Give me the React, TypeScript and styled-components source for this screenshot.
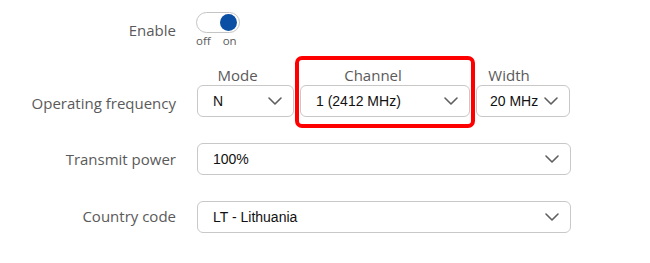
import React, { useState } from "react";
import styled, { createGlobalStyle } from "styled-components";

const GlobalStyle = createGlobalStyle`
  html, body {
    margin: 0;
    padding: 0;
    background: #ffffff;
  }
  body {
    font-family: "Open Sans", "Liberation Sans", sans-serif;
  }
`;

interface SelectProps {
  value: string;
  width: number;
  padLeft?: number;
}

const Chevron = () => (
  <svg width="14" height="8" viewBox="0 0 14 8" fill="none">
    <path
      d="M1 1L7 7L13 1"
      stroke="#5f5f5f"
      strokeWidth="1.6"
      strokeLinecap="round"
      strokeLinejoin="round"
    />
  </svg>
);

const Select: React.FC<SelectProps> = ({ value, width, padLeft = 15 }) => (
  <SelectBox $width={width} $padLeft={padLeft}>
    <SelectText>{value}</SelectText>
    <Chevron />
  </SelectBox>
);

const App: React.FC = () => {
  const [enabled, setEnabled] = useState(true);

  return (
    <>
      <GlobalStyle />
      <Form>
        <Row $top={12}>
          <Label $offset={8}>Enable</Label>
          <ToggleWrap>
            <Toggle $on={enabled} onClick={() => setEnabled(!enabled)}>
              <Knob $on={enabled} />
            </Toggle>
            <ToggleLabels>
              <span>off</span>
              <span>on</span>
            </ToggleLabels>
          </ToggleWrap>
        </Row>

        <Row $top={17}>
          <Label $offset={28}>Operating frequency</Label>
          <FreqGroup>
            <FreqCol>
              <ColHeading $shift={-8}>Mode</ColHeading>
              <Select value="N" width={97} />
            </FreqCol>
            <FreqCol>
              <ColHeading $shift={-12}>Channel</ColHeading>
              <Select value="1 (2412 MHz)" width={170} />
              <Highlight />
            </FreqCol>
            <FreqCol>
              <ColHeading $shift={-14}>Width</ColHeading>
              <Select value="20 MHz" width={94} padLeft={13} />
            </FreqCol>
          </FreqGroup>
        </Row>

        <Row $top={26}>
          <Label $offset={6}>Transmit power</Label>
          <Select value="100%" width={374} />
        </Row>

        <Row $top={26}>
          <Label $offset={5}>Country code</Label>
          <Select value="LT - Lithuania" width={374} />
        </Row>
      </Form>
    </>
  );
};

export default App;

const Form = styled.div`
  display: flex;
  flex-direction: column;
  width: 650px;
`;

const Row = styled.div<{ $top: number }>`
  display: flex;
  align-items: flex-start;
  gap: 21px;
  margin-top: ${(p) => p.$top}px;
`;

const Label = styled.div<{ $offset: number }>`
  width: 176px;
  flex-shrink: 0;
  text-align: right;
  padding-top: ${(p) => p.$offset}px;
  font-family: "Open Sans", sans-serif;
  font-size: 15px;
  line-height: 20px;
  color: #5a5a5a;
`;

const ToggleWrap = styled.div`
  display: flex;
  flex-direction: column;
  align-items: flex-start;
`;

const Toggle = styled.div<{ $on: boolean }>`
  position: relative;
  box-sizing: border-box;
  width: 44px;
  height: 21px;
  margin-left: -1px;
  border: 1px solid #c4c4c4;
  border-radius: 11px;
  background: #ffffff;
  cursor: pointer;
`;

const Knob = styled.div<{ $on: boolean }>`
  position: absolute;
  top: 1px;
  left: ${(p) => (p.$on ? "23px" : "1px")};
  width: 17px;
  height: 17px;
  border-radius: 50%;
  background: #0a4fa3;
`;

const ToggleLabels = styled.div`
  display: flex;
  gap: 12px;
  margin-top: 1px;
  margin-left: -1px;
  font-family: "Open Sans", sans-serif;
  font-size: 11.5px;
  line-height: 14px;
  color: #5a5a5a;
`;

const FreqGroup = styled.div`
  display: flex;
  gap: 6px;
`;

const FreqCol = styled.div`
  position: relative;
  display: flex;
  flex-direction: column;
  align-items: center;
`;

const ColHeading = styled.div<{ $shift: number }>`
  position: relative;
  left: ${(p) => p.$shift}px;
  font-family: "Open Sans", sans-serif;
  font-size: 15px;
  line-height: 19px;
  color: #5a5a5a;
  margin-top: 1px;
`;

const Highlight = styled.div`
  position: absolute;
  left: -5px;
  right: -5px;
  top: -9px;
  bottom: -11px;
  border: 4px solid #ff0000;
  border-radius: 7px;
  pointer-events: none;
`;

const SelectBox = styled.div<{ $width: number; $padLeft: number }>`
  box-sizing: border-box;
  display: flex;
  align-items: center;
  justify-content: space-between;
  width: ${(p) => p.$width}px;
  height: 32px;
  padding: 0 11px 0 ${(p) => p.$padLeft}px;
  border: 1px solid #c8c8c8;
  border-radius: 6px;
  background: #ffffff;
`;

const SelectText = styled.span`
  font-family: "Liberation Sans", Arial, sans-serif;
  font-size: 14px;
  color: #111111;
  white-space: nowrap;
`;
